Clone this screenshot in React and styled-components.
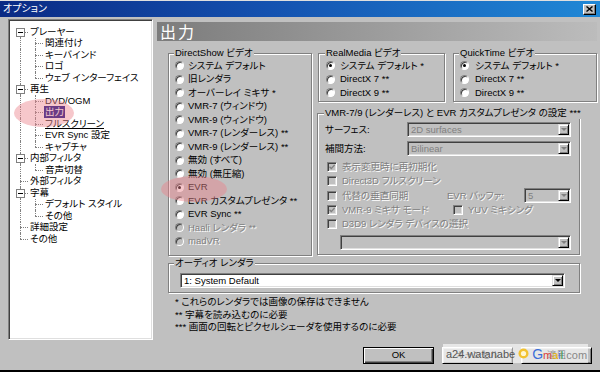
import React from "react";
import styled, { createGlobalStyle } from "styled-components";

const GlobalStyle = createGlobalStyle`
  html, body {
    margin: 0;
    padding: 0;
    background: #c0c0c0;
  }
  body {
    font-family: "Liberation Sans", "Noto Sans CJK JP", sans-serif;
    font-size: 9.5px;
    font-feature-settings: "palt";
    color: #000;
  }
`;

const Window = styled.div`
  position: relative;
  width: 600px;
  height: 372px;
  box-sizing: border-box;
  background: #c0c0c0;
  border-top: 1px solid #dfdfdf;
  border-bottom: 2px solid #000;
  display: flex;
  flex-direction: column;
  overflow: hidden;
`;

const TitleBar = styled.div`
  height: 16px;
  flex: none;
  display: flex;
  align-items: center;
  justify-content: space-between;
  padding: 0 4px 0 3px;
  background: linear-gradient(to right, #0a2a84 0%, #1452b0 45%, #2088d6 100%);
  color: #fff;
  font-size: 10px;
  line-height: 16px;
`;

const CloseButton = styled.span`
  width: 13px;
  height: 11px;
  box-sizing: border-box;
  background: #c0c0c0;
  border: 1px solid;
  border-color: #fff #000 #000 #fff;
  box-shadow: inset -1px -1px 0 #808080;
  display: flex;
  align-items: center;
  justify-content: center;
`;

const Body = styled.div`
  flex: 1;
  display: flex;
  padding: 2px 0 0 8px;
`;

const Tree = styled.div`
  width: 145px;
  height: 321px;
  box-sizing: border-box;
  background: #fff;
  border: 1px solid;
  border-color: #808080 #fff #fff #808080;
  box-shadow: inset 1px 1px 0 #404040, inset -1px -1px 0 #dfdfdf;
  padding: 6px 0 0 4px;
`;

const TreeRow = styled.div`
  display: flex;
  height: 11.5px;
  align-items: center;
  line-height: 11px;
  white-space: nowrap;
`;

const Guide = styled.span`
  position: relative;
  flex: none;
  width: 15px;
  height: 100%;
  &::before {
    content: "";
    display: ${p => (p.$v === "none" ? "none" : "block")};
    position: absolute;
    left: 7px;
    top: ${p => (p.$v === "bottom" ? "50%" : "0")};
    bottom: ${p => (p.$v === "top" ? "50%" : "0")};
    border-left: 1px dotted #808080;
  }
  &::after {
    content: "";
    display: ${p => (p.$h ? "block" : "none")};
    position: absolute;
    left: 7px;
    right: 0;
    top: 50%;
    border-top: 1px dotted #808080;
  }
`;

const Expander = styled.span`
  position: absolute;
  z-index: 1;
  left: 3px;
  top: 50%;
  margin-top: -4px;
  width: 9px;
  height: 9px;
  box-sizing: border-box;
  background: #fff;
  border: 1px solid #808080;
  &::after {
    content: "";
    position: absolute;
    left: 1px;
    right: 1px;
    top: 3px;
    border-top: 1px solid #000;
  }
`;

const TreeLabel = styled.span`
  padding: 0 1px;
  margin-left: 1px;
  line-height: 12px;
  background: ${p => (p.$selected ? "#000080" : "transparent")};
  color: ${p => (p.$selected ? "#fff" : "#000")};
  text-decoration: ${p => (p.$underline ? "underline" : "none")};
`;

const Main = styled.div`
  width: 440px;
  margin: 3px 0 0 4px;
  display: flex;
  flex-direction: column;
`;

const PageHeader = styled.div`
  height: 19px;
  flex: none;
  padding-left: 3px;
  background: linear-gradient(to right, #7c7c7c 0%, #9c9c9c 50%, #bcbcbc 100%);
  color: #fff;
  font-family: "Noto Sans CJK JP", sans-serif;
  font-size: 16px;
  line-height: 19px;
  letter-spacing: 2px;
`;

const Content = styled.div`
  padding-left: 11px;
  display: flex;
  flex-direction: column;
`;

const TopRow = styled.div`
  display: flex;
  align-items: flex-start;
  margin-top: 6px;
`;

const SideStack = styled.div`
  display: flex;
  flex-direction: column;
  margin-left: 5px;
`;

const VideoRow = styled.div`
  display: flex;
`;

const Group = styled.fieldset`
  box-sizing: border-box;
  margin: ${p => p.$margin || "0"};
  padding: 0 ${p => p.$padRight || 6}px 0 ${p => p.$padLeft || 6}px;
  min-width: 0;
  width: ${p => p.$w}px;
  height: ${p => p.$h}px;
  border: 1px solid #808080;
  box-shadow: inset 1px 1px 0 #fff, 1px 1px 0 #fff;
`;

const Legend = styled.legend`
  padding: 0 1px;
  margin-left: -1px;
  height: 12px;
  line-height: 12px;
  background: #c0c0c0;
  white-space: nowrap;
`;

const RadioRow = styled.div`
  display: flex;
  align-items: center;
  gap: ${p => p.$gap || 4}px;
  height: 13.5px;
  white-space: nowrap;
`;

const RadioDot = styled.span`
  flex: none;
  width: 9px;
  height: 9px;
  box-sizing: border-box;
  border-radius: 50%;
  background: ${p => (p.$disabled ? "#c0c0c0" : "#fff")};
  border: 1px solid;
  border-color: #808080 #fff #fff #808080;
  box-shadow: inset 1px 1px 0 #404040;
  display: flex;
  align-items: center;
  justify-content: center;
  &::after {
    content: "";
    display: ${p => (p.$checked ? "block" : "none")};
    width: 3px;
    height: 3px;
    border-radius: 50%;
    background: #000;
  }
`;

const Text = styled.span`
  line-height: 12px;
  white-space: nowrap;
  color: ${p => (p.$disabled ? "#808080" : "#000")};
  text-shadow: ${p => (p.$disabled ? "1px 1px 0 #fff" : "none")};
`;

const FieldRow = styled.div`
  display: flex;
  align-items: center;
  height: 15px;
  margin-top: ${p => p.$top || 0}px;
`;

const FieldLabel = styled.span`
  width: 82px;
  flex: none;
  line-height: 12px;
`;

const Combo = styled.div`
  display: flex;
  flex: ${p => (p.$w ? "none" : "1")};
  width: ${p => (p.$w ? `${p.$w}px` : "auto")};
  box-sizing: border-box;
  height: 15px;
  margin-left: ${p => p.$left || 0}px;
  margin-top: ${p => p.$top || 0}px;
  padding: 1px;
  background: ${p => (p.$disabled ? "#c0c0c0" : "#fff")};
  border: 1px solid;
  border-color: #808080 #fff #fff #808080;
  box-shadow: inset 1px 1px 0 #404040, inset -1px -1px 0 #dfdfdf;
`;

const ComboText = styled.span`
  flex: 1;
  padding-left: 2px;
  line-height: 11px;
  white-space: nowrap;
  overflow: hidden;
  color: ${p => (p.$disabled ? "#808080" : "#000")};
`;

const ArrowButton = styled.span`
  flex: none;
  width: 11px;
  box-sizing: border-box;
  background: #c0c0c0;
  border: 1px solid;
  border-color: #dfdfdf #000 #000 #dfdfdf;
  box-shadow: inset 1px 1px 0 #fff, inset -1px -1px 0 #808080;
  display: flex;
  align-items: center;
  justify-content: center;
  &::after {
    content: "";
    border-left: 3px solid transparent;
    border-right: 3px solid transparent;
    border-top: 3px solid ${p => (p.$disabled ? "#808080" : "#000")};
  }
`;

const OptionGrid = styled.div`
  display: grid;
  grid-template-columns: 122px 1fr;
  grid-template-rows: 14px 14px 15px 14px 14px;
  align-items: center;
  margin-top: 4px;
`;

const CheckRow = styled.div`
  display: flex;
  align-items: center;
  gap: 5px;
  padding-left: ${p => p.$left || 2}px;
  grid-column: ${p => (p.$span ? "1 / 3" : "auto")};
  white-space: nowrap;
`;

const CheckBox = styled.span`
  flex: none;
  width: 10px;
  height: 10px;
  box-sizing: border-box;
  background: ${p => (p.$disabled ? "#c0c0c0" : "#fff")};
  border: 1px solid;
  border-color: #808080 #fff #fff #808080;
  box-shadow: inset 1px 1px 0 #404040, inset -1px -1px 0 #dfdfdf;
  display: flex;
  align-items: center;
  justify-content: center;
`;

const BufferCell = styled.div`
  display: flex;
  align-items: center;
  justify-content: space-between;
`;

const Notes = styled.div`
  margin-top: 3px;
  padding-left: 7px;
  line-height: 12.5px;
  white-space: nowrap;
`;

const ButtonBar = styled.div`
  display: flex;
  justify-content: flex-end;
  gap: 8px;
  margin: 13px 5px 0 0;
`;

const Button = styled.div`
  width: 71px;
  height: 17px;
  box-sizing: border-box;
  background: #c0c0c0;
  border: 1px solid;
  border-color: ${p => (p.$default ? "#000" : "#fff #000 #000 #fff")};
  box-shadow: ${p =>
    p.$default
      ? "inset 1px 1px 0 #fff, inset -1px -1px 0 #404040, inset -2px -2px 0 #808080"
      : "inset 1px 1px 0 #dfdfdf, inset -1px -1px 0 #808080"};
  display: flex;
  align-items: center;
  justify-content: center;
  line-height: 12px;
`;

const Annotation = styled.span`
  position: absolute;
  left: ${p => p.$x - p.$rx}px;
  top: ${p => p.$y - p.$ry}px;
  width: ${p => p.$rx * 2}px;
  height: ${p => p.$ry * 2}px;
  border-radius: 50%;
  background: rgba(236, 130, 140, 0.45);
  pointer-events: none;
`;

const Watermark = styled.div`
  position: absolute;
  left: 443px;
  top: 343px;
  width: 145px;
  height: 19px;
  box-sizing: border-box;
  padding-left: 3px;
  background: rgba(255, 255, 255, 0.6);
  display: flex;
  align-items: center;
  gap: 3px;
  font-family: "Liberation Sans", sans-serif;
  font-size: 11px;
  color: #555;
  white-space: nowrap;
`;

const Letter = styled.span`
  color: ${p => p.$c};
  font-size: ${p => p.$size || 11}px;
`;

const treeItems = [
  { label: "プレーヤー", guides: [{ v: "bottom", h: true, box: true }] },
  { label: "関連付け", guides: [{ v: "full" }, { v: "full", h: true }] },
  { label: "キーバインド", guides: [{ v: "full" }, { v: "full", h: true }] },
  { label: "ロゴ", guides: [{ v: "full" }, { v: "full", h: true }] },
  { label: "ウェブ インターフェイス", guides: [{ v: "full" }, { v: "top", h: true }] },
  { label: "再生", guides: [{ v: "full", h: true, box: true }] },
  { label: "DVD/OGM", guides: [{ v: "full" }, { v: "full", h: true }] },
  { label: "出力", selected: true, guides: [{ v: "full" }, { v: "full", h: true }] },
  { label: "フルスクリーン", underline: true, guides: [{ v: "full" }, { v: "full", h: true }] },
  { label: "EVR Sync 設定", guides: [{ v: "full" }, { v: "full", h: true }] },
  { label: "キャプチャ", guides: [{ v: "full" }, { v: "top", h: true }] },
  { label: "内部フィルタ", guides: [{ v: "full", h: true, box: true }] },
  { label: "音声切替", guides: [{ v: "full" }, { v: "top", h: true }] },
  { label: "外部フィルタ", guides: [{ v: "full", h: true }] },
  { label: "字幕", guides: [{ v: "full", h: true, box: true }] },
  { label: "デフォルト スタイル", guides: [{ v: "full" }, { v: "full", h: true }] },
  { label: "その他", guides: [{ v: "full" }, { v: "top", h: true }] },
  { label: "詳細設定", guides: [{ v: "full", h: true }] },
  { label: "その他", guides: [{ v: "top", h: true }] },
];

const directShow = [
  { label: "システム デフォルト" },
  { label: "旧レンダラ" },
  { label: "オーバーレイ ミキサ *" },
  { label: "VMR-7 (ウィンドウ)" },
  { label: "VMR-9 (ウィンドウ)" },
  { label: "VMR-7 (レンダーレス) **" },
  { label: "VMR-9 (レンダーレス) **" },
  { label: "無効 (すべて)" },
  { label: "無効 (無圧縮)" },
  { label: "EVR", checked: true },
  { label: "EVR カスタムプレゼンタ **" },
  { label: "EVR Sync **" },
  { label: "Haali レンダラ **", disabled: true },
  { label: "madVR", disabled: true },
];

const altVideo = [
  { label: "システム デフォルト *", checked: true },
  { label: "DirectX 7 **" },
  { label: "DirectX 9 **" },
];

function Radio({ label, checked, disabled, gap }) {
  return (
    <RadioRow $gap={gap}>
      <RadioDot $checked={checked} $disabled={disabled} />
      <Text $disabled={disabled}>{label}</Text>
    </RadioRow>
  );
}

function Check({ label, checked, span, left }) {
  return (
    <CheckRow $span={span} $left={left}>
      <CheckBox $disabled>
        {checked && (
          <svg width="6" height="6" viewBox="0 0 6 6">
            <polyline points="0.5,2.8 2.3,4.6 5.6,1" fill="none" stroke="#808080" strokeWidth="1.4" />
          </svg>
        )}
      </CheckBox>
      <Text $disabled>{label}</Text>
    </CheckRow>
  );
}

function Select({ value, disabled, w, left, top }) {
  return (
    <Combo $disabled={disabled} $w={w} $left={left} $top={top}>
      <ComboText $disabled={disabled}>{value}</ComboText>
      <ArrowButton $disabled={disabled} />
    </Combo>
  );
}

export default function App() {
  return (
    <>
      <GlobalStyle />
      <Window>
        <TitleBar>
          <span>オプション</span>
          <CloseButton>
            <svg width="7" height="6" viewBox="0 0 7 6">
              <path d="M0.5 0.5 L6.5 5.5 M6.5 0.5 L0.5 5.5" stroke="#000" strokeWidth="1.4" />
            </svg>
          </CloseButton>
        </TitleBar>

        <Body>
          <Tree>
            {treeItems.map((item, i) => (
              <TreeRow key={i}>
                {item.guides.map((g, j) => (
                  <Guide key={j} $v={g.v} $h={g.h}>
                    {g.box && <Expander />}
                  </Guide>
                ))}
                <TreeLabel $selected={item.selected} $underline={item.underline}>
                  {item.label}
                </TreeLabel>
              </TreeRow>
            ))}
          </Tree>

          <Main>
            <PageHeader>出力</PageHeader>
            <Content>
              <TopRow>
                <Group $w={144} $h={209}>
                  <Legend>DirectShow ビデオ</Legend>
                  {directShow.map(r => (
                    <Radio key={r.label} {...r} />
                  ))}
                </Group>

                <SideStack>
                  <VideoRow>
                    <Group $w={127} $h={55} $padLeft={7} $margin="0 0 0 1px">
                      <Legend>RealMedia ビデオ</Legend>
                      {altVideo.map(r => (
                        <Radio key={r.label} {...r} gap={5} />
                      ))}
                    </Group>
                    <Group $w={144} $h={55} $margin="0 0 0 8px">
                      <Legend>QuickTime ビデオ</Legend>
                      {altVideo.map(r => (
                        <Radio key={r.label} {...r} gap={6} />
                      ))}
                    </Group>
                  </VideoRow>

                  <Group $w={263} $h={148} $padLeft={7} $padRight={8} $margin="5px 0 0 0">
                    <Legend>VMR-7/9 (レンダーレス) と EVR カスタムプレゼンタ の設定 ***</Legend>
                    <FieldRow $top={3}>
                      <FieldLabel>サーフェス:</FieldLabel>
                      <Select value="2D surfaces" disabled />
                    </FieldRow>
                    <FieldRow $top={4}>
                      <FieldLabel>補間方法:</FieldLabel>
                      <Select value="Bilinear" disabled />
                    </FieldRow>
                    <OptionGrid>
                      <Check label="表示変更時に再初期化" checked span />
                      <Check label="Direct3D フルスクリーン" span />
                      <Check label="代替の垂直同期" />
                      <BufferCell>
                        <Text $disabled>EVR バッファ:</Text>
                        <Select value="5" disabled w={47} />
                      </BufferCell>
                      <Check label="VMR-9 ミキサ モード" checked />
                      <Check label="YUV ミキシング" left={6} />
                      <Check label="D3D9 レンダラ デバイスの選択" span />
                    </OptionGrid>
                    <Select value="" disabled left={15} top={4} />
                  </Group>
                </SideStack>
              </TopRow>

              <Group $w={412} $h={36} $margin="1px 0 0 0">
                <Legend>オーディオ レンダラ</Legend>
                <Select value="1: System Default" w={385} left={5} top={4} />
              </Group>

              <Notes>
                <div>* これらのレンダラでは画像の保存はできません</div>
                <div>** 字幕を読み込むのに必要</div>
                <div>*** 画面の回転とピクセルシェーダを使用するのに必要</div>
              </Notes>

              <ButtonBar>
                <Button $default>OK</Button>
                <Button>キャンセル</Button>
                <Button>適用</Button>
              </ButtonBar>
            </Content>
          </Main>
        </Body>

        <Annotation $x={44} $y={112} $rx={30} $ry={14} />
        <Annotation $x={194} $y={188} $rx={33} $ry={13} />

        <Watermark>
          <span>a24.watanabe</span>
          <svg width="11" height="11" viewBox="0 0 11 11">
            <circle cx="5.5" cy="5.5" r="5" fill="#f2c230" />
            <circle cx="5.5" cy="5.5" r="2.6" fill="#fff6d0" />
          </svg>
          <span>
            <Letter $c="#3b6fd8" $size={14}>G</Letter>
            <Letter $c="#d9443a">m</Letter>
            <Letter $c="#e8b000">a</Letter>
            <Letter $c="#3b6fd8">i</Letter>
            <Letter $c="#3a9a4a">l</Letter>
            <Letter $c="#888">.com</Letter>
          </span>
        </Watermark>
      </Window>
    </>
  );
}
